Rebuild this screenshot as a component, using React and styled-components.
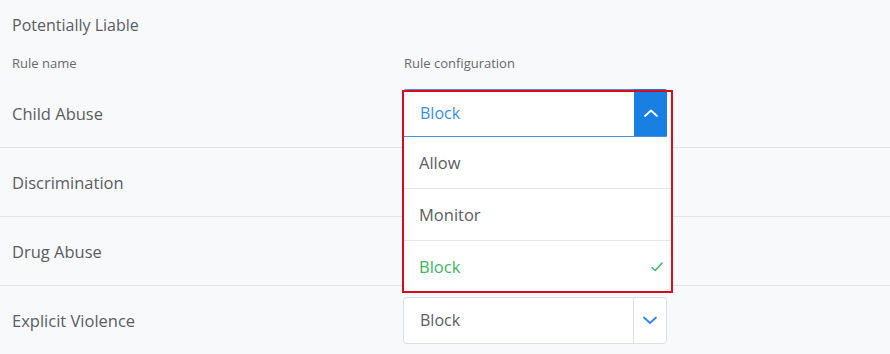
import React, { useState } from 'react';
import styled, { createGlobalStyle } from 'styled-components';

const GlobalStyle = createGlobalStyle`
html, body {
  margin: 0;
  padding: 0;
  background: #f8f9fb;
}
body {
  font-family: "Open Sans", Lato, sans-serif;
  color: #5a5d62;
}
`;

const Page = styled.div`
width: 890px;
height: 354px;
overflow: hidden;
`;

const Title = styled.h2`
margin: 0;
padding: 15px 12px 0;
font-size: 16px;
font-weight: 400;
line-height: 20px;
`;

const HeaderRow = styled.div`
display: grid;
grid-template-columns: 392px 1fr;
padding: 20px 12px 0;
margin-bottom: 8px;
font-size: 13px;
line-height: 16px;
color: #66696e;
`;

const Row = styled.div`
display: grid;
grid-template-columns: 391px 1fr;
align-items: center;
height: 68px;
padding-left: 12px;
border-bottom: 1px solid #e1e3e7;
position: relative;
z-index: ${({ $raised }) => ($raised ? 2 : 1)};
`;

const RuleName = styled.div`
font-size: 16.5px;
`;

const SelectWrap = styled.div`
position: relative;
width: 264px;
`;

const SelectBox = styled.div`
display: flex;
align-items: stretch;
height: ${({ $open }) => ($open ? '48px' : '47px')};
box-sizing: border-box;
background: #fff;
border: 1px solid ${({ $open }) => ($open ? '#4d8fe0' : '#dcdfe3')};
border-radius: ${({ $open }) => ($open ? '3px 3px 0 0' : '4px')};
`;

const SelectValue = styled.div`
flex: 1;
display: flex;
align-items: center;
padding-left: 16px;
font-size: 16px;
color: ${({ $open }) => ($open ? '#3a8fe8' : '#5a5d62')};
`;

const Toggle = styled.div`
width: 32px;
display: flex;
align-items: center;
justify-content: center;
background: ${({ $open }) => ($open ? '#1a7fe2' : '#fff')};
border-left: 1px solid ${({ $open }) => ($open ? '#1a7fe2' : '#dcdfe3')};
border-radius: ${({ $open }) => ($open ? '0 2px 0 0' : '0 4px 4px 0')};
margin: ${({ $open }) => ($open ? '-1px -1px 0 0' : '0')};
`;

const Menu = styled.ul`
position: absolute;
top: 100%;
left: 0;
right: -4px;
margin: 0;
padding: 0;
list-style: none;
background: #fff;
`;

const Option = styled.li`
display: flex;
align-items: center;
justify-content: space-between;
height: 51px;
padding: 0 8px 0 16px;
font-size: 16.5px;
color: ${({ $selected }) => ($selected ? '#3fb366' : '#5a5d62')};
border-bottom: ${({ $last }) => ($last ? 'none' : '1px solid #e4e6ea')};
`;

const Highlight = styled.div`
position: absolute;
top: 1px;
left: -1px;
right: -6px;
height: 203px;
border: 2px solid #dc0a1e;
box-sizing: border-box;
pointer-events: none;
`;

const Chevron = ({ up, color }) => (
  <svg width="16" height="10" viewBox="0 0 16 10" fill="none">
    <path
      d={up ? 'M2 8 L8 2.5 L14 8' : 'M2 2.5 L8 8 L14 2.5'}
      stroke={color}
      strokeWidth="1.8"
      strokeLinecap="round"
      strokeLinejoin="round"
    />
  </svg>
);

const Check = () => (
  <svg width="12" height="10" viewBox="0 0 12 10" fill="none">
    <path d="M1 5.5 L4.2 8.5 L11 1" stroke="#3fb366" strokeWidth="1.5" strokeLinecap="round" strokeLinejoin="round" />
  </svg>
);

const options = ['Allow', 'Monitor', 'Block'];

const rules = [
  { name: 'Child Abuse', value: 'Block', open: true },
  { name: 'Discrimination', value: 'Block' },
  { name: 'Drug Abuse', value: 'Block' },
  { name: 'Explicit Violence', value: 'Block', shown: true },
];

const RuleSelect = ({ value, open }) => (
  <SelectWrap>
    <SelectBox $open={open}>
      <SelectValue $open={open}>{value}</SelectValue>
      <Toggle $open={open}>
        <Chevron up={open} color={open ? '#fff' : '#2f86e6'} />
      </Toggle>
    </SelectBox>
    {open && (
      <>
        <Menu>
          {options.map((o, i) => (
            <Option key={o} $selected={o === value} $last={i === options.length - 1}>
              {o}
              {o === value && <Check />}
            </Option>
          ))}
        </Menu>
        <Highlight />
      </>
    )}
  </SelectWrap>
);

const App = () => {
  const [items] = useState(rules);

  return (
    <Page>
      <GlobalStyle />
      <Title>Potentially Liable</Title>
      <HeaderRow>
        <span>Rule name</span>
        <span>Rule configuration</span>
      </HeaderRow>
      {items.map((r) => (
        <Row key={r.name} $raised={r.open}>
          <RuleName>{r.name}</RuleName>
          {r.open || r.shown ? <RuleSelect value={r.value} open={!!r.open} /> : <div />}
        </Row>
      ))}
    </Page>
  );
};

export default App;
